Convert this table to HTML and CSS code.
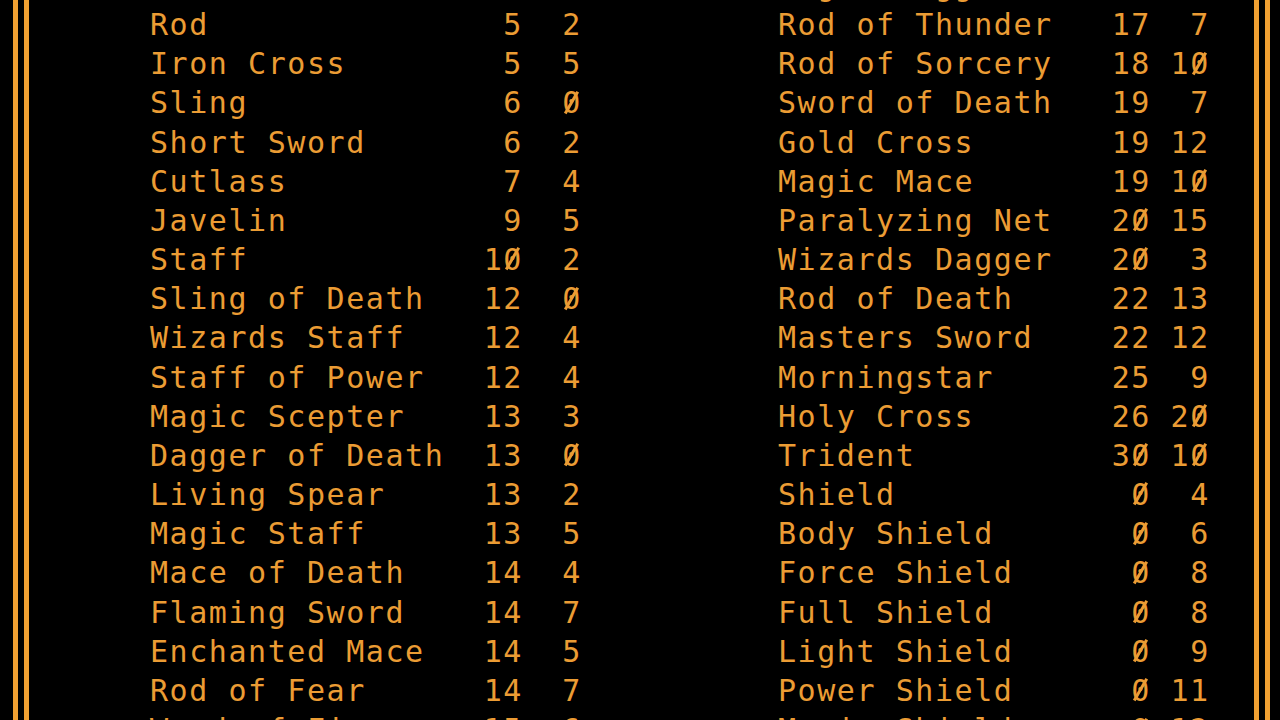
FILE: index.html
```html
<!DOCTYPE html>
<html lang="en">
<head>
<meta charset="utf-8">
<title>Weapons</title>
<link rel="stylesheet" href="styles.css">
</head>
<body>
<div class="frame">
  <div class="table">
    <ul class="col col-left">
      <li class="item"><span class="name">Rod</span><span class="num">5</span><span class="num">2</span></li>
      <li class="item"><span class="name">Iron Cross</span><span class="num">5</span><span class="num">5</span></li>
      <li class="item"><span class="name">Sling</span><span class="num">6</span><span class="num"><span class="z">0</span></span></li>
      <li class="item"><span class="name">Short Sword</span><span class="num">6</span><span class="num">2</span></li>
      <li class="item"><span class="name">Cutlass</span><span class="num">7</span><span class="num">4</span></li>
      <li class="item"><span class="name">Javelin</span><span class="num">9</span><span class="num">5</span></li>
      <li class="item"><span class="name">Staff</span><span class="num">1<span class="z">0</span></span><span class="num">2</span></li>
      <li class="item"><span class="name">Sling of Death</span><span class="num">12</span><span class="num"><span class="z">0</span></span></li>
      <li class="item"><span class="name">Wizards Staff</span><span class="num">12</span><span class="num">4</span></li>
      <li class="item"><span class="name">Staff of Power</span><span class="num">12</span><span class="num">4</span></li>
      <li class="item"><span class="name">Magic Scepter</span><span class="num">13</span><span class="num">3</span></li>
      <li class="item"><span class="name">Dagger of Death</span><span class="num">13</span><span class="num"><span class="z">0</span></span></li>
      <li class="item"><span class="name">Living Spear</span><span class="num">13</span><span class="num">2</span></li>
      <li class="item"><span class="name">Magic Staff</span><span class="num">13</span><span class="num">5</span></li>
      <li class="item"><span class="name">Mace of Death</span><span class="num">14</span><span class="num">4</span></li>
      <li class="item"><span class="name">Flaming Sword</span><span class="num">14</span><span class="num">7</span></li>
      <li class="item"><span class="name">Enchanted Mace</span><span class="num">14</span><span class="num">5</span></li>
      <li class="item"><span class="name">Rod of Fear</span><span class="num">14</span><span class="num">7</span></li>
      <li class="item"><span class="name">Wand of Fire</span><span class="num">15</span><span class="num">6</span></li>
    </ul>
    <ul class="col">
      <li class="item"><span class="name">Magic Dagger</span><span class="num">16</span><span class="num">4</span></li>
      <li class="item"><span class="name">Rod of Thunder</span><span class="num">17</span><span class="num">7</span></li>
      <li class="item"><span class="name">Rod of Sorcery</span><span class="num">18</span><span class="num">1<span class="z">0</span></span></li>
      <li class="item"><span class="name">Sword of Death</span><span class="num">19</span><span class="num">7</span></li>
      <li class="item"><span class="name">Gold Cross</span><span class="num">19</span><span class="num">12</span></li>
      <li class="item"><span class="name">Magic Mace</span><span class="num">19</span><span class="num">1<span class="z">0</span></span></li>
      <li class="item"><span class="name">Paralyzing Net</span><span class="num">2<span class="z">0</span></span><span class="num">15</span></li>
      <li class="item"><span class="name">Wizards Dagger</span><span class="num">2<span class="z">0</span></span><span class="num">3</span></li>
      <li class="item"><span class="name">Rod of Death</span><span class="num">22</span><span class="num">13</span></li>
      <li class="item"><span class="name">Masters Sword</span><span class="num">22</span><span class="num">12</span></li>
      <li class="item"><span class="name">Morningstar</span><span class="num">25</span><span class="num">9</span></li>
      <li class="item"><span class="name">Holy Cross</span><span class="num">26</span><span class="num">2<span class="z">0</span></span></li>
      <li class="item"><span class="name">Trident</span><span class="num">3<span class="z">0</span></span><span class="num">1<span class="z">0</span></span></li>
      <li class="item"><span class="name">Shield</span><span class="num"><span class="z">0</span></span><span class="num">4</span></li>
      <li class="item"><span class="name">Body Shield</span><span class="num"><span class="z">0</span></span><span class="num">6</span></li>
      <li class="item"><span class="name">Force Shield</span><span class="num"><span class="z">0</span></span><span class="num">8</span></li>
      <li class="item"><span class="name">Full Shield</span><span class="num"><span class="z">0</span></span><span class="num">8</span></li>
      <li class="item"><span class="name">Light Shield</span><span class="num"><span class="z">0</span></span><span class="num">9</span></li>
      <li class="item"><span class="name">Power Shield</span><span class="num"><span class="z">0</span></span><span class="num">11</span></li>
      <li class="item"><span class="name">Magic Shield</span><span class="num"><span class="z">0</span></span><span class="num">12</span></li>
    </ul>
  </div>
</div>
</body>
</html>
```
FILE: styles.css
```css
:root {
  --cell: 19.625px;
  --row: 39.18px;
  --amber: #f0a032;
  --text: #eb9c34;
}

html, body {
  margin: 0;
  padding: 0;
  background: #000;
  height: 720px;
  overflow: hidden;
}

.frame {
  box-sizing: border-box;
  height: 720px;
  margin: 0 10px 0 13px;
  border-left: 16px double var(--amber);
  border-right: 16px double var(--amber);
  overflow: hidden;
}

.table {
  display: grid;
  grid-template-columns: calc(var(--cell) * 32) 1fr;
  padding-left: 121px;
  margin-top: -34.15px;
  font-family: "DejaVu Sans Mono", "Liberation Mono", monospace;
  font-size: 30px;
  letter-spacing: 1.56px;
  color: var(--text);
}

.col {
  list-style: none;
  margin: 0;
  padding: 0;
}

.col-left {
  padding-top: var(--row);
}

.item {
  display: grid;
  grid-template-columns: calc(var(--cell) * 17) calc(var(--cell) * 2) calc(var(--cell) * 3);
  height: var(--row);
  line-height: var(--row);
  white-space: pre;
}

.num {
  text-align: right;
}

/* slashed zero, as on the original terminal */
.z {
  position: relative;
}

.z::after {
  content: "";
  position: absolute;
  left: 7.7px;
  top: 4.4px;
  width: 2.8px;
  height: 25px;
  background: currentColor;
  transform: rotate(30deg);
}
```
